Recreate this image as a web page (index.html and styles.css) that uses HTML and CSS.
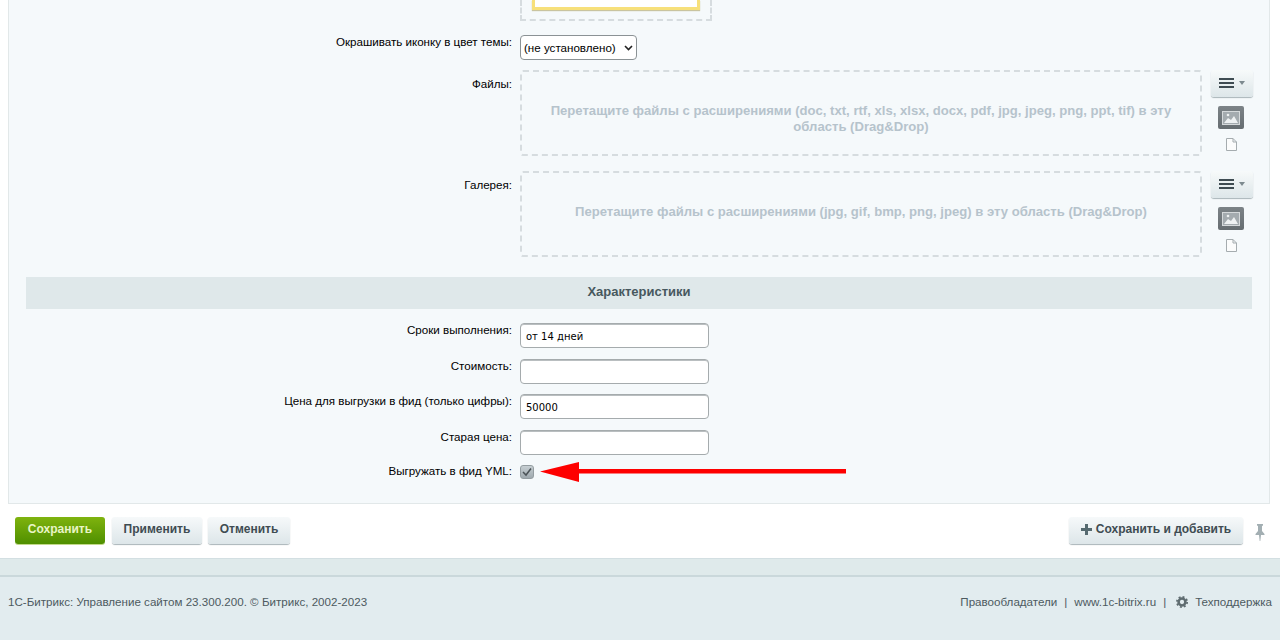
FILE: index.html
```html
<!DOCTYPE html>
<html lang="ru">
<head>
<meta charset="utf-8">
<title>Редактирование элемента</title>
<link rel="stylesheet" href="styles.css">
</head>
<body>
<main class="panel">
  <div class="row row-top">
    <div class="label"></div>
    <div class="top-drop"><div class="top-image"></div></div>
  </div>
  <div class="row row-select">
    <div class="label">Окрашивать иконку в цвет темы:</div>
    <div class="select-wrap">
      <select class="select"><option>(не установлено)</option></select>
      <svg class="select-chevron" width="9" height="6" viewBox="0 0 9 6"><path d="M1 1l3.500 3.500L8 1" fill="none" stroke="#222" stroke-width="1.600"/></svg>
    </div>
  </div>
  <div class="row row-files">
    <div class="label label-drop">Файлы:</div>
    <div class="drop">Перетащите файлы с расширениями (doc, txt, rtf, xls, xlsx, docx, pdf, jpg, jpeg, png, ppt, tif) в эту область (Drag&amp;Drop)</div>
    <div class="tools">
      <button class="menu-btn" type="button"><span class="burger"></span><span class="caret"></span></button>
      <span class="img-tool"><svg width="18" height="14" viewBox="0 0 18 14"><rect x=".5" y=".5" width="17" height="13" fill="#a4abaf" stroke="#d5d9db"/><path d="M2 12l4-5 3 2 3-4 4 7z" fill="#eef1f2"/><circle cx="6" cy="4" r="1.300" fill="#eef1f2"/></svg></span>
      <svg class="file-tool" width="11" height="13" viewBox="0 0 11 13"><path d="M.5.5h6.500l3.500 3.500v8.500h-10zM7 .5v3.500h3.500" fill="#fbfcfc" stroke="#a5acaf"/></svg>
    </div>
  </div>
  <div class="row row-gallery">
    <div class="label label-drop">Галерея:</div>
    <div class="drop">Перетащите файлы с расширениями (jpg, gif, bmp, png, jpeg) в эту область (Drag&amp;Drop)</div>
    <div class="tools">
      <button class="menu-btn" type="button"><span class="burger"></span><span class="caret"></span></button>
      <span class="img-tool"><svg width="18" height="14" viewBox="0 0 18 14"><rect x=".5" y=".5" width="17" height="13" fill="#a4abaf" stroke="#d5d9db"/><path d="M2 12l4-5 3 2 3-4 4 7z" fill="#eef1f2"/><circle cx="6" cy="4" r="1.300" fill="#eef1f2"/></svg></span>
      <svg class="file-tool" width="11" height="13" viewBox="0 0 11 13"><path d="M.5.5h6.500l3.500 3.500v8.500h-10zM7 .5v3.500h3.500" fill="#fbfcfc" stroke="#a5acaf"/></svg>
    </div>
  </div>
  <h2 class="heading">Характеристики</h2>
  <div class="row row-input">
    <div class="label">Сроки выполнения:</div>
    <input class="input" type="text" value="от 14 дней">
  </div>
  <div class="row row-input">
    <div class="label">Стоимость:</div>
    <input class="input" type="text">
  </div>
  <div class="row row-input">
    <div class="label">Цена для выгрузки в фид (только цифры):</div>
    <input class="input" type="text" value="50000">
  </div>
  <div class="row row-input">
    <div class="label">Старая цена:</div>
    <input class="input" type="text">
  </div>
  <div class="row row-check">
    <div class="label">Выгружать в фид YML:</div>
    <span class="check"><svg width="14" height="14" viewBox="0 0 14 14"><path d="M3 7l3 3 5-6.500" fill="none" stroke="#4b5357" stroke-width="1.500"/></svg></span>
  </div>
  <svg class="arrow" width="306" height="20" viewBox="0 0 306 20"><path d="M0 9.500L39 0v7h267v4.500H39V20z" fill="#fe0000"/></svg>
</main>
<div class="actions">
  <button class="btn btn-save" type="button">Сохранить</button>
  <button class="btn btn-apply" type="button">Применить</button>
  <button class="btn btn-cancel" type="button">Отменить</button>
  <button class="btn btn-add" type="button"><svg width="11" height="11" viewBox="0 0 11 11"><path d="M4 0h3v4h4v3H7v4H4V7H0V4h4z" fill="#566a70"/></svg>Сохранить и добавить</button>
  <svg class="pin" width="10" height="17" viewBox="0 0 10 17"><path d="M2 0h6v1.500L7 2v5l2.500 3v1H6l-.7 6h-.6L4 11H.5v-1L3 7V2l-1-.5z" fill="#a3afb3"/></svg>
</div>
<footer class="footer">
  <div class="footer-strip"></div>
  <div class="footer-main">
    <span>1С-Битрикс: Управление сайтом 23.300.200. © Битрикс, 2002-2023</span>
    <nav class="footer-links">
      <a>Правообладатели</a><i>|</i><a>www.1c-bitrix.ru</a><i>|</i>
      <svg width="12" height="12" viewBox="0 0 14 14"><circle cx="7" cy="7" r="4" fill="none" stroke="#5f6c70" stroke-width="3"/><circle cx="7" cy="7" r="6" fill="none" stroke="#5f6c70" stroke-width="2" stroke-dasharray="2.300 2.400"/></svg>
      <a>Техподдержка</a>
    </nav>
  </div>
</footer>
</body>
</html>
```
FILE: styles.css
```css
* { box-sizing: border-box; }
html, body { margin: 0; height: 640px; overflow: hidden; }
body {
  background: #fff;
  font-family: "Liberation Sans", Arial, sans-serif;
  font-size: 11.6px;
  color: #000;
  display: flex;
  flex-direction: column;
}
.panel {
  position: relative;
  height: 504px;
  margin: 0 10px 0 8px;
  background: #f5f9fb;
  border: 1px solid #e2e8e9;
  border-top: 0;
  padding-right: 17px;
  padding-left: 17px;
}
.row {
  display: grid;
  grid-template-columns: 486px 1fr;
  column-gap: 8px;
  align-items: start;
}
.label { text-align: right; line-height: 14px; }
.row-top { height: 35px; }
.top-drop {
  width: 192px;
  height: 21px;
  border: 2px dashed #d6dcdf;
  border-top: 0;
  padding: 0 10px;
}
.top-image {
  height: 10px;
  background: #fff;
  border: 3px solid #f7e07a;
  border-top: 0;
  box-shadow: 0 1px 1px #c9c4a0;
}
.row-select { height: 35px; }
.select-wrap { position: relative; width: 117px; height: 25px; }
.select {
  appearance: none;
  display: block;
  width: 117px;
  height: 25px;
  font: 11.6px "Liberation Sans", Arial, sans-serif;
  color: #000;
  background: #fff;
  border: 1px solid #8b9295;
  border-radius: 4px;
  padding: 0 0 0 3px;
}
.select-chevron { position: absolute; left: 104px; top: 10px; pointer-events: none; }
.row-files, .row-gallery { grid-template-columns: 486px 682px 1fr; }
.row-files { height: 101px; }
.row-gallery { height: 106px; }
.label-drop { padding-top: 7px; }
.drop {
  height: 86px;
  border: 2px dashed #d6dcdf;
  border-radius: 3px;
  padding: 31px 20px 0;
  text-align: center;
  font-weight: 700;
  font-size: 13.1px;
  line-height: 16px;
  color: #b6c3cc;
}
.tools {
  display: flex;
  flex-direction: column;
  align-items: center;
  width: 42px;
  margin-left: 1px;
}
.menu-btn {
  width: 42px;
  height: 27px;
  border: 0;
  border-radius: 3px;
  padding: 0 0 1px;
  background: linear-gradient(#f7fafa, #dde6e9);
  box-shadow: 0 1px 1px #a9b4b8;
  display: flex;
  align-items: center;
  justify-content: center;
  gap: 5px;
}
.burger {
  width: 15px;
  height: 10px;
  border-top: 2px solid #3f4c52;
  border-bottom: 2px solid #3f4c52;
}
.burger::after {
  content: "";
  display: block;
  height: 2px;
  margin-top: 2px;
  background: #3f4c52;
}
.caret {
  width: 0;
  height: 0;
  border: 3px solid transparent;
  border-top: 4px solid #7d8a8f;
  border-bottom: 0;
}
.img-tool {
  width: 26px;
  height: 23px;
  margin: 9px 2px 0 0;
  background: linear-gradient(#7c8387, #666d71);
  border-radius: 2px;
  display: flex;
  align-items: center;
  justify-content: center;
}
.file-tool { margin: 9px 2px 0 0; }
.heading {
  height: 32px;
  margin: 0 0 14px;
  background: #dfe8ea;
  font-size: 13px;
  line-height: 30px;
  font-weight: 700;
  text-align: center;
  color: #47585e;
}
.row-input { height: 35.500px; }
.input {
  width: 188.500px;
  height: 25px;
  border: 1px solid #a5abad;
  box-shadow: inset 0 1px 0 #b9bec0;
  border-radius: 4px;
  background: #fff;
  padding: 2px 5px 0;
  font: 10px "DejaVu Sans", sans-serif;
  color: #000;
  margin: 0;
}
.row-check { height: 24px; margin-top: -1.500px; }
.check {
  display: block;
  width: 14px;
  height: 14px;
  margin-top: 1px;
  background: linear-gradient(#c6ced2, #9fa9ae);
  border: 1px solid #949da1;
  border-radius: 3px;
}
.check svg { display: block; margin: -1px; }
.arrow { position: absolute; left: 531px; top: 462px; }
.actions {
  height: 54px;
  padding: 13px 0 0 15px;
  display: flex;
  align-items: flex-start;
  gap: 6px;
}
.btn {
  height: 27px;
  padding: 0 0 3px;
  border: 0;
  border-radius: 3px;
  background: linear-gradient(#f6f9fa, #dde6e9);
  box-shadow: 0 1px 1px #a9b4b8;
  font: 700 12px "Liberation Sans", Arial, sans-serif;
  color: #3f4c52;
}
.btn-save {
  width: 90px;
  margin-right: 1px;
  background: linear-gradient(#7fb30e, #4f8f00);
  box-shadow: 0 1px 0 #c2d98a;
  color: #e9f5c6;
}
.btn-apply { width: 90px; }
.btn-cancel { width: 82px; }
.btn-add {
  margin-left: auto;
  width: 174px;
  display: flex;
  align-items: center;
  justify-content: center;
  gap: 4px;
}
.pin { margin: 7px 15px 0 6px; }
.footer {
  flex: 1;
  background: #e2ecef;
  border-top: 1px solid #d3dfe2;
}
.footer-strip { height: 18px; background: #dfeaeb; border-bottom: 2px solid #cad8db; }
.footer-main {
  display: flex;
  justify-content: space-between;
  align-items: center;
  padding: 18px 8px 0;
  color: #4d5a5f;
  line-height: 14px;
}
.footer-links { display: flex; align-items: center; }
.footer-links i { font-style: normal; margin: 0 7px; }
.footer-links svg { margin: 0 7px 0 3px; }
```
